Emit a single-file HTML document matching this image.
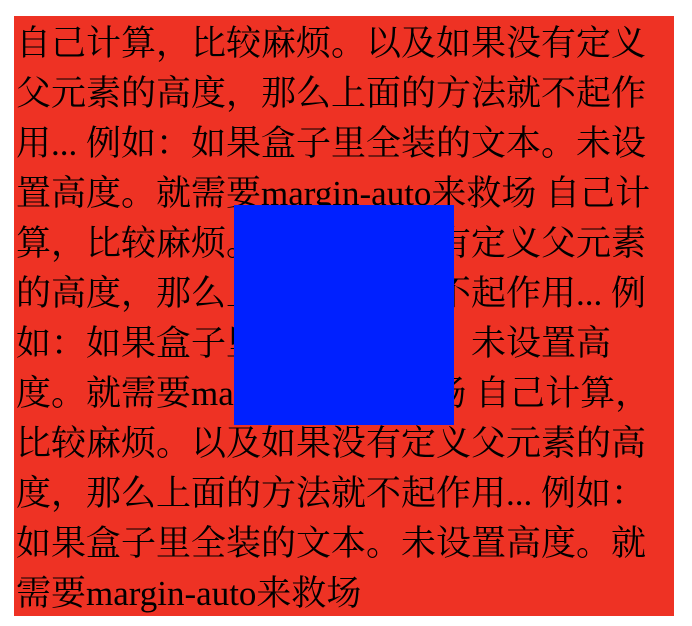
<!DOCTYPE html>
<html><head><meta charset="utf-8"><style>
html,body{margin:0;padding:0;background:#fff;}
.box{position:absolute;left:14px;top:16px;width:660px;height:600px;background:#ee3224;}
.t{position:absolute;left:16px;top:19px;font-family:"Liberation Serif","Noto Serif CJK SC",serif;font-size:35px;line-height:50px;color:#000;white-space:nowrap;}
.blue{position:absolute;left:234px;top:205px;width:220px;height:220px;background:#0020ff;}
</style></head><body>
<div class="box"></div>
<div class="t">自己计算，比较麻烦。以及如果没有定义<br>父元素的高度，那么上面的方法就不起作<br>用... 例如：如果盒子里全装的文本。未设<br>置高度。就需要margin-auto来救场 自己计<br>算，比较麻烦。以及如果没有定义父元素<br>的高度，那么上面的方法就不起作用... 例<br>如：如果盒子里全装的文本。未设置高<br>度。就需要margin-auto来救场 自己计算，<br>比较麻烦。以及如果没有定义父元素的高<br>度，那么上面的方法就不起作用... 例如：<br>如果盒子里全装的文本。未设置高度。就<br>需要margin-auto来救场</div>
<div class="blue"></div>
</body></html>
